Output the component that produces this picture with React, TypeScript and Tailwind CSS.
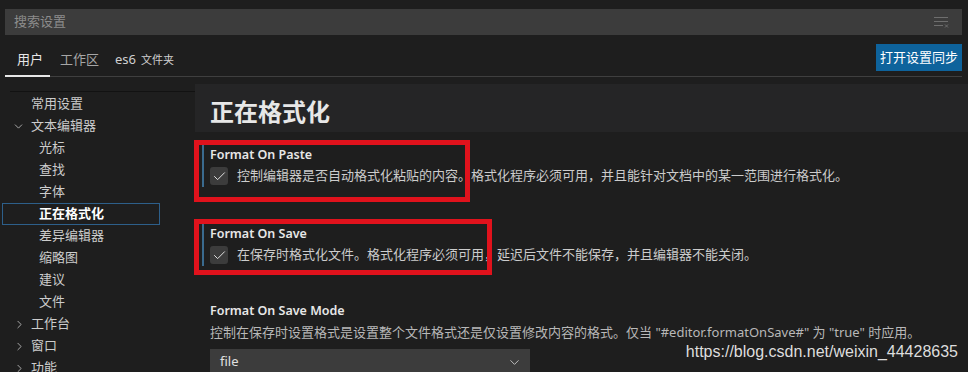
import { Check, ChevronDown, ChevronRight } from 'lucide-react';

const tocItems = [
  { label: '常用设置', level: 0 },
  { label: '文本编辑器', level: 0, open: true },
  { label: '光标', level: 1 },
  { label: '查找', level: 1 },
  { label: '字体', level: 1 },
  { label: '正在格式化', level: 1, active: true },
  { label: '差异编辑器', level: 1 },
  { label: '缩略图', level: 1 },
  { label: '建议', level: 1 },
  { label: '文件', level: 1 },
  { label: '工作台', level: 0, closed: true },
  { label: '窗口', level: 0, closed: true },
  { label: '功能', level: 0, closed: true },
];

function FilterIcon() {
  return (
    <svg width="16" height="14" viewBox="0 0 16 14" fill="none" stroke="#6e6e6e" strokeWidth="1.2">
      <path d="M1 2.5h14M1 6.5h14M1 10.5h9" />
      <path d="M12 9.5l3 3M15 9.5l-3 3" strokeWidth="1" />
    </svg>
  );
}

function BoolSetting({ title, desc, focused }: { title: string; desc: string; focused?: boolean }) {
  return (
    <div className="pl-[7px] pt-[13px] pb-[24px]">
      <div className={`border-l-2 pl-[6px] ${focused ? 'border-[#3a6a8e]' : 'border-transparent'}`}>
        <div className="h-[20px] text-[12.5px] leading-[20px] font-semibold text-[#e7e7e7]">{title}</div>
        <div className="flex h-[22px] items-center gap-[9px]">
          <div className="flex h-[18px] w-[18px] items-center justify-center rounded-[3px] bg-[#3c3c3c]">
            <Check size={15} strokeWidth={1.6} className="text-[#e0e0e0]" />
          </div>
          <span className="text-[13px] whitespace-nowrap text-[#cccccc]">{desc}</span>
        </div>
      </div>
    </div>
  );
}

export default function App() {
  return (
    <div className="relative h-[372px] w-[968px] overflow-hidden bg-[#1e1e1e] font-['Noto_Sans','Noto_Sans_CJK_SC',sans-serif] text-[#cccccc]">
      <div className="pr-[6px] pl-[5px] pt-[9px]">
        <div className="flex h-[26px] items-center justify-between bg-[#3c3c3c] pr-[13px] pl-[9px]">
          <span className="text-[13px] text-[#8c8c8c]">搜索设置</span>
          <FilterIcon />
        </div>
        <div className="mt-[9px] flex h-[33px] justify-between border-b border-[#3f3f3f]">
          <div className="flex">
            <div className="-mb-px flex items-center border-b-2 border-[#e7e7e7] pr-[7px] pl-[12px] text-[13px] text-[#e7e7e7]">
              用户
            </div>
            <div className="flex items-center pr-[16px] pl-[10px] text-[13px] text-[#a6a6a6]">工作区</div>
            <div className="flex items-center text-[13px] text-[#d0d0d0]">
              es6<span className="ml-[5px] text-[11px]">文件夹</span>
            </div>
          </div>
          <div className="flex h-[27px] items-center bg-[#0e639c] px-[4px] text-[13px] text-white">打开设置同步</div>
        </div>
      </div>

      <div className="mt-[7px] flex">
        <div className="w-[195px] shrink-0 pt-[7px]">
          <div className="ml-[10px] h-px bg-[#121212]" />
          <div className="pt-px">
            {tocItems.map((it) => (
              <div
                key={it.label}
                className={`flex h-[22px] items-center text-[13px] ${
                  it.active
                    ? 'ml-[2px] mr-[35px] border border-[#2d5f8a] pl-[36px] font-bold text-white'
                    : it.level === 1
                      ? 'pl-[39px] text-[#cccccc]'
                      : 'text-[#cccccc]'
                }`}
              >
                {it.level === 0 && (
                  <span className="flex w-[31px] items-center justify-end pr-[3px]">
                    {it.open && <ChevronDown size={13} strokeWidth={1.5} className="mr-[3px] text-[#c5c5c5]" />}
                    {it.closed && <ChevronRight size={13} strokeWidth={1.5} className="mr-[2px] text-[#c5c5c5]" />}
                  </span>
                )}
                {it.label}
              </div>
            ))}
          </div>
        </div>

        <div className="flex-1">
          <div className="h-[48px] bg-[#252526] pt-[13px] pl-[15px] text-[24px] leading-[30px] font-bold text-[#e7e7e7]">
            正在格式化
          </div>
          <BoolSetting
            focused
            title="Format On Paste"
            desc="控制编辑器是否自动格式化粘贴的内容。格式化程序必须可用，并且能针对文档中的某一范围进行格式化。"
          />
          <BoolSetting
            focused
            title="Format On Save"
            desc="在保存时格式化文件。格式化程序必须可用，延迟后文件不能保存，并且编辑器不能关闭。"
          />
          <div className="pl-[15px] pt-[11px]">
            <div className="h-[20px] text-[12.5px] leading-[20px] font-semibold text-[#e7e7e7]">Format On Save Mode</div>
            <div className="h-[22px] text-[13px] leading-[22px] whitespace-nowrap text-[#b8b8b8]">
              控制在保存时设置格式是设置整个文件格式还是仅设置修改内容的格式。仅当 "#editor.formatOnSave#" 为 "true" 时应用。
            </div>
            <div className="mt-[6px] flex h-[26px] w-[320px] items-center justify-between bg-[#3c3c3c] pr-[8px] pl-[10px] text-[13px] text-[#e0e0e0]">
              file
              <ChevronDown size={15} strokeWidth={1.5} className="text-[#c5c5c5]" />
            </div>
          </div>
        </div>
      </div>

      <div className="pointer-events-none absolute top-[140px] left-[194px] h-[62px] w-[276px] border-[5px] border-[#e0121c]" />
      <div className="pointer-events-none absolute top-[219px] left-[194px] h-[56px] w-[298px] border-[5px] border-[#e0121c]" />

      <div className="absolute top-[341px] right-[10px] font-['Liberation_Sans',Arial,sans-serif] text-[16px] leading-[22px] text-[#dddddd]">
        https://blog.csdn.net/weixin_44428635
      </div>
    </div>
  );
}
